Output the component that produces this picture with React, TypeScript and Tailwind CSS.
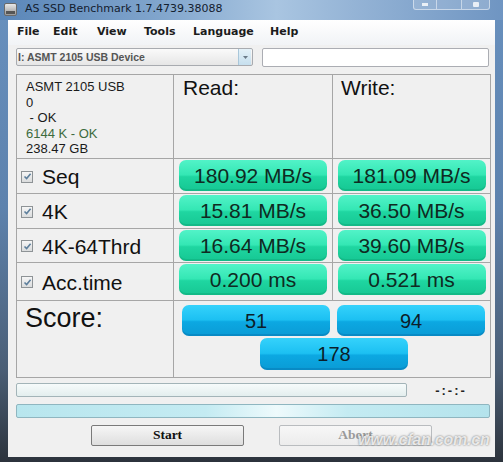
import React from 'react';

const rows = [
  { name: 'Seq', read: '180.92 MB/s', write: '181.09 MB/s', h: 'h-[35px]' },
  { name: '4K', read: '15.81 MB/s', write: '36.50 MB/s', h: 'h-[35px]' },
  { name: '4K-64Thrd', read: '16.64 MB/s', write: '39.60 MB/s', h: 'h-[34px]' },
  { name: 'Acc.time', read: '0.200 ms', write: '0.521 ms', h: 'h-[38px]' },
];

const menu = [
  { label: 'File', w: 'w-[36px]' },
  { label: 'Edit', w: 'w-[44px]' },
  { label: 'View', w: 'w-[47px]' },
  { label: 'Tools', w: 'w-[49px]' },
  { label: 'Language', w: 'w-[77px]' },
  { label: 'Help', w: 'w-[40px]' },
];

function CheckBox() {
  return (
    <div className="w-[12px] h-[12px] border border-[#8e9396] bg-gradient-to-b from-[#f6f6f6] to-[#dadcdd] flex items-center justify-center">
      <svg width="9" height="9" viewBox="0 0 9 9">
        <path d="M1.5 4.5 L3.6 6.6 L7.6 1.8" fill="none" stroke="#5d7f9c" strokeWidth="1.6" />
      </svg>
    </div>
  );
}

function GreenBar({ value }: { value: string }) {
  return (
    <div className="w-[148px] h-[31px] rounded-[7px] bg-[linear-gradient(to_bottom,#52f3c8_0%,#34e7b4_48%,#1fd6a1_54%,#16c793_100%)] shadow-[inset_0_-2px_0_rgba(0,120,80,0.18)] flex items-center justify-center text-[21px] leading-none text-[#0f2a22]">
      {value}
    </div>
  );
}

function BlueBar({ value, h }: { value: string; h: string }) {
  return (
    <div className={`w-[148px] ${h} rounded-[7px] bg-[linear-gradient(to_bottom,#35d2fb_0%,#1cc0f2_48%,#0ca8e2_54%,#0a9bd5_100%)] shadow-[inset_0_-2px_0_rgba(0,70,130,0.2)] flex items-center justify-center text-[20px] leading-none text-[#0c1e2a]`}>
      {value}
    </div>
  );
}

export default function App() {
  return (
    <div className="w-[503px] h-[462px] relative overflow-hidden flex flex-col bg-[linear-gradient(to_bottom,#6890be_0%,#5d82ad_45%,#4b5e75_80%,#2c333c_100%)] font-['Liberation_Sans',Arial,sans-serif]">
      {/* title bar */}
      <div className="h-[20px] flex items-start bg-[linear-gradient(to_right,#5a86b8_0%,#7ea3cb_30%,#a9c5e1_55%,#95b4d6_70%,#6f95c2_100%)]">
        <div className="ml-[4px] mt-[3px] w-[13px] h-[13px] rounded-[2px] bg-gradient-to-b from-[#e8e8e8] to-[#9a9a9a] border border-[#6a6a6a] flex flex-col justify-end p-[1px]">
          <div className="h-[3px] bg-[#555]" />
        </div>
        <div className="ml-[8px] mt-[2px] text-[11px] leading-[14px] text-[#14202e] font-['DejaVu_Sans',sans-serif]">
          AS SSD Benchmark 1.7.4739.38088
        </div>
        <div className="ml-auto mr-[13px] flex h-[10px]">
          <div className="w-[24px] border border-t-0 border-white/50 bg-white/15 rounded-bl-[3px] flex justify-center">
            <div className="mt-[3px] w-[6px] h-[3px] bg-white/80" />
          </div>
          <div className="w-[25px] border border-t-0 border-l-0 border-white/50 bg-white/15" />
          <div className="w-[28px] border border-t-0 border-l-0 border-white/50 bg-white/20 rounded-br-[3px] flex justify-center">
            <div className="mt-[2px] w-[6px] h-[5px] bg-white/80 rounded-[1px]" />
          </div>
        </div>
      </div>

      {/* client area */}
      <div className="ml-[8px] w-[487px] h-[437px] bg-[#f0f0f0] flex flex-col">
        {/* menu */}
        <div className="h-[25px] flex items-center pl-[9px] bg-gradient-to-b from-[#ffffff] to-[#f1f3f6] font-['DejaVu_Sans',sans-serif] font-bold text-[11px] text-[#1c1c1c]">
          {menu.map((m) => (
            <div key={m.label} className={m.w}>
              {m.label}
            </div>
          ))}
        </div>

        {/* drive selector */}
        <div className="mt-[3px] h-[19px] flex pl-[8px] gap-[9px]">
          <div className="w-[237px] h-[18px] border border-[#a8abb0] rounded-[2px] bg-gradient-to-b from-[#fafafa] to-[#e6e6e6] flex items-center">
            <div className="flex-1 pl-[1px] text-[10.5px] font-bold text-[#555] leading-none">I: ASMT 2105 USB Device</div>
            <div className="w-[13px] h-[16px] mr-[1px] bg-gradient-to-b from-[#e4f1f8] to-[#c6dfee] border-l border-[#a9c7da] flex items-center justify-center">
              <svg width="5" height="3" viewBox="0 0 5 3">
                <path d="M0 0 L5 0 L2.5 3 Z" fill="#6b7b88" />
              </svg>
            </div>
          </div>
          <div className="w-[227px] h-[19px] border border-[#abadb3] rounded-[2px] bg-white" />
        </div>

        {/* results table */}
        <div className="mt-[7px] ml-[8px] w-[475px] border-l border-t border-[#a6a6a6] flex flex-col">
          {/* header */}
          <div className="h-[84px] flex">
            <div className="w-[157px] border-r border-b border-[#a6a6a6] pl-[9px] pt-[4px] text-[13px] leading-[15.5px] text-[#1a1a1a]">
              <div>ASMT 2105 USB</div>
              <div>0</div>
              <div>&nbsp;- OK</div>
              <div className="text-[#3d6b3d]">6144 K - OK</div>
              <div>238.47 GB</div>
            </div>
            <div className="w-[159px] border-r border-b border-[#a6a6a6] pl-[9px] pt-[2px] text-[21px] leading-none text-[#111]">
              Read:
            </div>
            <div className="w-[158px] border-r border-b border-[#a6a6a6] pl-[8px] pt-[2px] text-[21px] leading-none text-[#111]">
              Write:
            </div>
          </div>

          {rows.map((r) => (
            <div key={r.name} className={`${r.h} flex`}>
              <div className="w-[157px] border-r border-b border-[#a6a6a6] flex items-center pl-[4px] gap-[9px] pt-[1px]">
                <CheckBox />
                <span className="text-[21px] leading-none text-[#111]">{r.name}</span>
              </div>
              <div className="w-[159px] border-r border-b border-[#a6a6a6] flex justify-center items-start pt-[1px]">
                <GreenBar value={r.read} />
              </div>
              <div className="w-[158px] border-r border-b border-[#a6a6a6] flex justify-center items-start pt-[1px]">
                <GreenBar value={r.write} />
              </div>
            </div>
          ))}

          {/* score */}
          <div className="h-[77px] flex">
            <div className="w-[157px] border-r border-b border-[#a6a6a6] pl-[8px] pt-[4px] text-[27px] leading-none text-[#111]">
              Score:
            </div>
            <div className="w-[317px] border-r border-b border-[#a6a6a6] flex flex-col pt-[4px] gap-[2px]">
              <div className="flex pl-[8px] gap-[7px]">
                <BlueBar value="51" h="h-[31px]" />
                <BlueBar value="94" h="h-[31px]" />
              </div>
              <div className="flex justify-center pl-[4px]">
                <BlueBar value="178" h="h-[32px]" />
              </div>
            </div>
          </div>
        </div>

        {/* progress */}
        <div className="mt-[5px] ml-[8px] h-[14px] flex items-center">
          <div className="w-[391px] h-[14px] border border-[#a3b4b8] rounded-[2px] bg-gradient-to-b from-[#f7fbfb] to-[#e3eeee]" />
          <div className="flex-1 text-center font-bold text-[13px] leading-none text-[#222] tracking-[2px]">-:-:-</div>
        </div>
        <div className="mt-[7px] ml-[8px] w-[474px] h-[14px] border border-[#8fb6c0] rounded-[2px] bg-[linear-gradient(to_right,#b8e6ee_0%,#c4ebf2_40%,#eefafc_55%,#c4ebf2_70%,#b4e3ec_100%)]" />

        {/* buttons */}
        <div className="mt-[7px] h-[21px] flex pl-[83px] gap-[35px] font-['Liberation_Serif',serif] font-bold text-[13.5px]">
          <div className="w-[153px] h-[21px] border border-[#7a7a7a] rounded-[2px] bg-gradient-to-b from-[#f6f6f6] to-[#dedede] flex items-center justify-center text-[#111]">
            Start
          </div>
          <div className="w-[153px] h-[21px] border border-[#b9bcbf] rounded-[2px] bg-gradient-to-b from-[#f7f7f7] to-[#ececec] flex items-center justify-center text-[#9a9a9a]">
            Abort
          </div>
        </div>
      </div>

      {/* watermark */}
      <div className="absolute left-[358px] top-[432px] italic font-bold text-[16px] leading-none tracking-[-0.2px] text-white/80 [text-shadow:0_0_2px_rgba(60,60,60,0.8)]">
        www.cfan.com.cn
      </div>
    </div>
  );
}
